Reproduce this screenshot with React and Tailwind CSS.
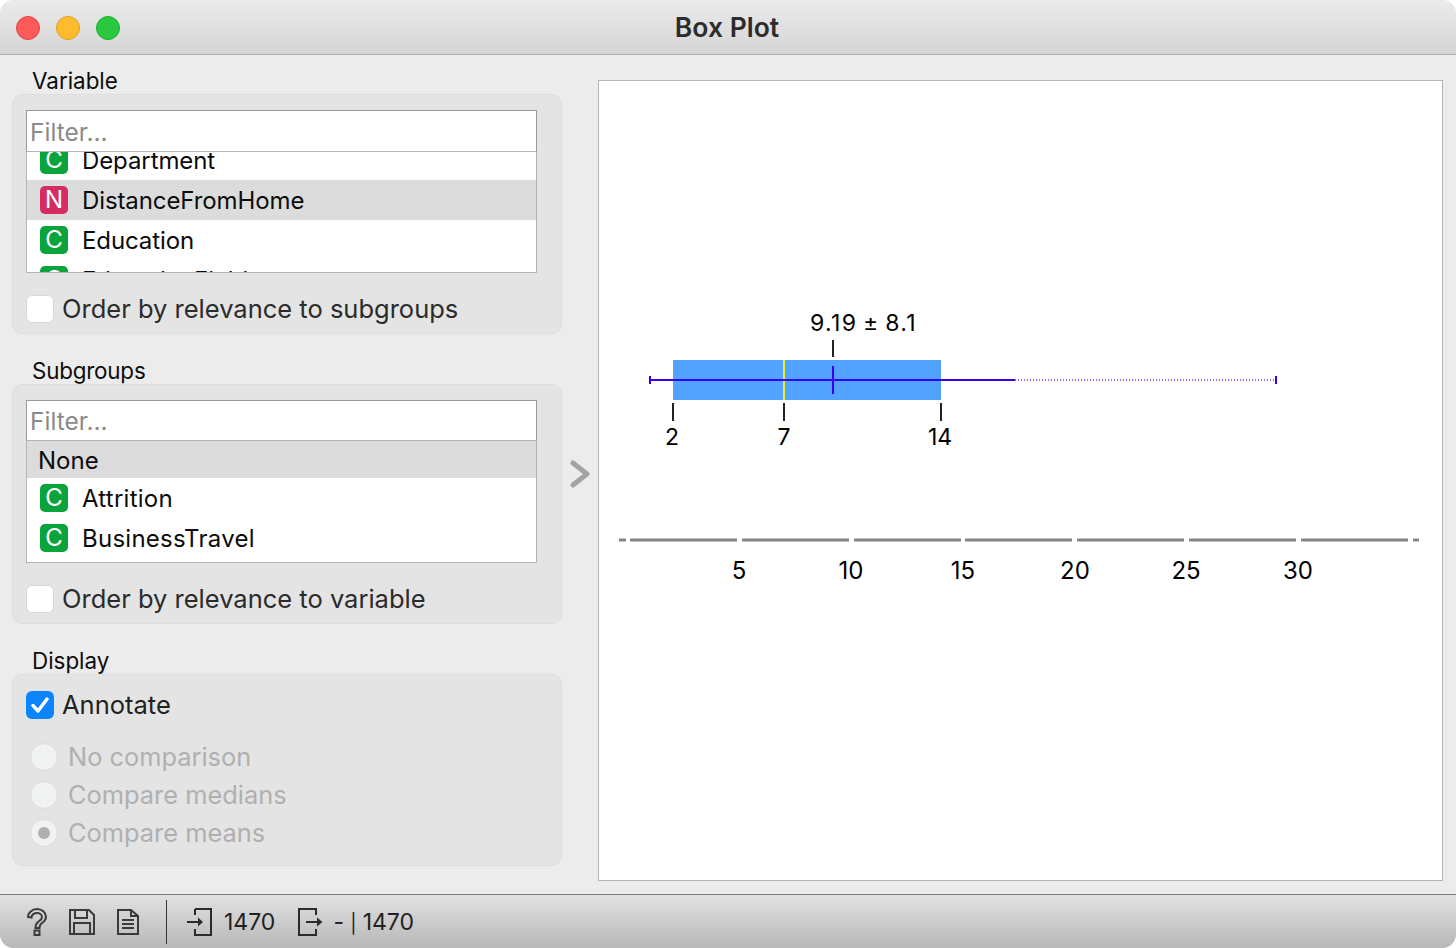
import React from 'react';

const VarBadge = ({ letter, color }) => (
    <span className={`w-[28px] h-[28px] rounded-[5px] flex items-center justify-center text-white text-[24px] shrink-0 ${color}`}>{letter}</span>
);

const VarRow = ({ letter, color, name, selected, nudge }) => (
    <div className={`flex items-center pl-[13px] gap-[14px] h-[40px] text-[24px] text-[#0c0c0c] ${selected ? 'bg-[#dcdcdc]' : ''}`}>
        <VarBadge letter={letter} color={color} />
        <span className={nudge ? 'pt-[2px] tracking-[0.25px]' : 'pt-[2px] tracking-[-0.1px]'}>{name}</span>
    </div>
);

const FilterInput = ({ tall }) => (
    <div className={`bg-white border border-[#9a9a9a] border-b-[#b5b5b5] pl-[3px] flex items-center text-[24.500px] text-[#8a8a8a] shrink-0 ${tall ? 'h-[42px] pt-[2px]' : 'h-[41px] pt-[1px]'}`}>Filter...</div>
);

const Checkbox = ({ label }) => (
    <div className="flex items-center gap-[8px] text-[25.500px] text-[#2b2b2b]">
        <span className="w-[28px] h-[28px] rounded-[6px] bg-white border border-[#d8d8d8] shrink-0" />
        <span>{label}</span>
    </div>
);

const Radio = ({ label, checked }) => (
    <div className="flex items-center gap-[10px] h-[38px] pl-[4px] text-[25.400px] text-[#b0b0b0]">
        <span className="w-[28px] h-[28px] rounded-full bg-[#f1f2f2] border border-[#dcdcdc] flex items-center justify-center shrink-0">
            {checked && <span className="w-[12px] h-[12px] rounded-full bg-[#b0b0b0]" />}
        </span>
        <span>{label}</span>
    </div>
);

const GroupLabel = ({ children, tight }) => (
    <div className={`pl-[20px] h-[26px] flex items-center text-[22.400px] text-[#0c0c0c] ${tight ? 'tracking-[-0.2px]' : ''}`}>{children}</div>
);

const BoxChart = () => (
    <svg width="843" height="799" viewBox="599 81 843 799" className="block" fontFamily="Inter, sans-serif" fontSize="23" fill="#000">
        <rect x="673" y="360" width="268" height="40" fill="#52a3ff" />
        <rect x="783" y="360" width="2" height="40" fill="#eeee20" />
        <line x1="650" y1="380" x2="1015" y2="380" stroke="#3c00f0" strokeWidth="2" />
        <line x1="1015" y1="380" x2="1275" y2="380" stroke="#9a66ff" strokeWidth="2" strokeDasharray="1 2" />
        <rect x="649" y="376" width="2" height="8" fill="#3c00f0" />
        <rect x="1275" y="376" width="2" height="8" fill="#3c00f0" />
        <rect x="832" y="366" width="2" height="28" fill="#3c00f0" />
        <rect x="832" y="340" width="2" height="17" fill="#222" />
        <rect x="672" y="403" width="2" height="18" fill="#222" />
        <rect x="783" y="403" width="2" height="18" fill="#222" />
        <rect x="940" y="403" width="2" height="18" fill="#222" />
        <text x="863.500" y="331" textAnchor="middle" letterSpacing="1.3" wordSpacing="-2">9.19 ± 8.1</text>
        <text x="672" y="445" textAnchor="middle">2</text>
        <text x="784" y="445" textAnchor="middle">7</text>
        <text x="940" y="445" textAnchor="middle">14</text>
        {[[619, 626], [630, 737], [742, 849], [854, 961], [965, 1072], [1077, 1184], [1189, 1296], [1301, 1408], [1413, 1419]].map(([a, b]) => (
            <line key={a} x1={a} y1="540" x2={b} y2="540" stroke="#858585" strokeWidth="3" />
        ))}
        {[[739, '5'], [851, '10'], [963, '15'], [1075, '20'], [1186, '25'], [1298, '30']].map(([x, t]) => (
            <text key={t} x={x} y="579" textAnchor="middle" fontSize="24">{t}</text>
        ))}
    </svg>
);

const Icons = {
    help: (
        <svg width="24" height="28" viewBox="0 0 24 28" fill="none" stroke="#3a3a3a" strokeWidth="2">
            <path d="M3 9c0-4 4-8 9-8s9 3.500 9 8c0 3-2 4.500-4 6-2 1.400-2.500 2.500-2.500 5h-4c0-3.500 1-5 3-6.500 2-1.400 3.500-2.300 3.500-4.500 0-2.400-2.500-4-5-4s-5.500 1.600-5.500 4.500z" />
            <rect x="9.500" y="22.500" width="5" height="4.500" />
        </svg>
    ),
    save: (
        <svg width="26" height="26" viewBox="0 0 26 26" fill="none" stroke="#3a3a3a" strokeWidth="2">
            <path d="M1 1h19l5 5v19H1z" />
            <path d="M6 1v8h12V1M5 25V14h16v11" />
        </svg>
    ),
    report: (
        <svg width="22" height="26" viewBox="0 0 22 26" fill="none" stroke="#3a3a3a" strokeWidth="2">
            <path d="M1 1h13l7 6v18H1z" />
            <path d="M14 1v6h7" />
            <path d="M5 11h12M5 15h12M5 19h12" />
        </svg>
    ),
    input: (
        <svg width="26" height="28" viewBox="0 0 26 28" fill="none" stroke="#2b2b2b" strokeWidth="2">
            <path d="M8 1h16v26H8v-6M8 7V1" />
            <path d="M0 14h15" />
            <path d="M11 9.500l5 4.500-5 4.500z" fill="#2b2b2b" stroke="none" />
        </svg>
    ),
    output: (
        <svg width="26" height="28" viewBox="0 0 26 28" fill="none" stroke="#2b2b2b" strokeWidth="2">
            <path d="M18 7V1H1v26h17v-6" />
            <path d="M8 14h15" />
            <path d="M19 9.500l5.500 4.500-5.500 4.500z" fill="#2b2b2b" stroke="none" />
        </svg>
    ),
};

export default function App() {
    return (
        <div className="w-[1456px] h-[948px] bg-white overflow-hidden" style={{ fontFamily: 'Inter, sans-serif' }}>
            <div className="w-full h-full bg-[#ececec] rounded-[14px] flex flex-col overflow-hidden">
                {/* title bar */}
                <div className="relative h-[55px] shrink-0 flex items-center justify-center bg-gradient-to-b from-[#ebebeb] to-[#d5d5d5] border-b border-[#b0b0b0]">
                    <div className="absolute left-[16px] top-[16px] flex gap-[16px]">
                        <span className="w-[24px] h-[24px] rounded-full bg-[#fc5b57] border border-[#e0443e]" />
                        <span className="w-[24px] h-[24px] rounded-full bg-[#febb2e] border border-[#dfa023]" />
                        <span className="w-[24px] h-[24px] rounded-full bg-[#29c840] border border-[#1dad2b]" />
                    </div>
                    <span className="text-[26.500px] font-semibold text-[#2c2c2c] pt-[1px] pr-[2px]">Box Plot</span>
                </div>

                <div className="flex-1 flex min-h-0">
                    {/* controls */}
                    <div className="w-[562px] shrink-0 pl-[12px] pt-[13px] flex flex-col">
                        <GroupLabel>Variable</GroupLabel>
                        <div className="h-[240px] rounded-[10px] bg-[#e4e4e4] border border-[#dedede] pl-[13px] pr-[24px] pt-[15px]">
                            <FilterInput tall />
                            <div className="h-[121px] bg-white border border-t-0 border-[#b5b5b5] overflow-hidden">
                                <div className="-mt-[12px]">
                                    <VarRow letter="C" color="bg-[#0ba33c]" name="Department" />
                                    <VarRow letter="N" color="bg-[#d42d5f]" name="DistanceFromHome" selected />
                                    <VarRow letter="C" color="bg-[#0ba33c]" name="Education" />
                                    <VarRow letter="C" color="bg-[#0ba33c]" name="EducationField" />
                                </div>
                            </div>
                            <div className="mt-[17px]">
                                <Checkbox label="Order by relevance to subgroups" />
                            </div>
                        </div>

                        <div className="mt-[24px]"><GroupLabel tight>Subgroups</GroupLabel></div>
                        <div className="h-[240px] rounded-[10px] bg-[#e4e4e4] border border-[#dedede] pl-[13px] pr-[24px] pt-[15px]">
                            <FilterInput />
                            <div className="h-[122px] bg-white border border-t-0 border-[#b5b5b5] overflow-hidden">
                                <div className="h-[37px] bg-[#dcdcdc] pl-[11px] pt-[2px] flex items-center text-[24px] text-[#0c0c0c]">None</div>
                                <VarRow letter="C" color="bg-[#0ba33c]" name="Attrition" nudge />
                                <VarRow letter="C" color="bg-[#0ba33c]" name="BusinessTravel" nudge />
                            </div>
                            <div className="mt-[17px]">
                                <Checkbox label="Order by relevance to variable" />
                            </div>
                        </div>

                        <div className="mt-[24px]"><GroupLabel>Display</GroupLabel></div>
                        <div className="h-[192px] rounded-[10px] bg-[#e4e4e4] border border-[#dedede] pl-[13px] pr-[24px] pt-[11px]">
                            <div className="flex items-center gap-[8px] text-[25.500px] text-[#222]">
                                <span className="w-[28px] h-[28px] rounded-[6px] bg-[#0a84ff] flex items-center justify-center shrink-0">
                                    <svg width="18" height="16" viewBox="0 0 18 16" fill="none" stroke="#fff" strokeWidth="3.400" strokeLinecap="round" strokeLinejoin="round">
                                        <path d="M2 8.500l5 5.500L16 2" />
                                    </svg>
                                </span>
                                <span>Annotate</span>
                            </div>
                            <div className="mt-[14px]">
                                <Radio label="No comparison" />
                                <Radio label="Compare medians" />
                                <Radio label="Compare means" checked />
                            </div>
                        </div>
                    </div>

                    {/* collapse handle */}
                    <div className="w-[36px] shrink-0 flex justify-center pt-[405px]">
                        <svg width="20" height="28" viewBox="0 0 20 28" fill="none" stroke="#a3a3a3" strokeWidth="5" strokeLinecap="round" strokeLinejoin="round">
                            <path d="M3 3l14 11L3 25" />
                        </svg>
                    </div>

                    {/* plot */}
                    <div className="pt-[25px]">
                        <div className="w-[845px] h-[801px] bg-white border border-[#b5b5b5]">
                            <BoxChart />
                        </div>
                    </div>
                </div>

                {/* status bar */}
                <div className="h-[54px] shrink-0 border-t border-[#7c7c7c] bg-gradient-to-b from-[#e2e2e2] to-[#b7b7b7] flex items-center pl-[25px] text-[23px] text-[#222]">
                    {Icons.help}
                    <span className="ml-[20px]">{Icons.save}</span>
                    <span className="ml-[22px]">{Icons.report}</span>
                    <span className="ml-[27px] w-[1px] h-[44px] bg-[#333]" />
                    <span className="ml-[20px]">{Icons.input}</span>
                    <span className="ml-[11px] pt-[1px]">1470</span>
                    <span className="ml-[23px]">{Icons.output}</span>
                    <span className="ml-[9px] pt-[1px] tracking-[-0.1px]">- <span className="text-[19px]">|</span> 1470</span>
                </div>
            </div>
        </div>
    );
}
